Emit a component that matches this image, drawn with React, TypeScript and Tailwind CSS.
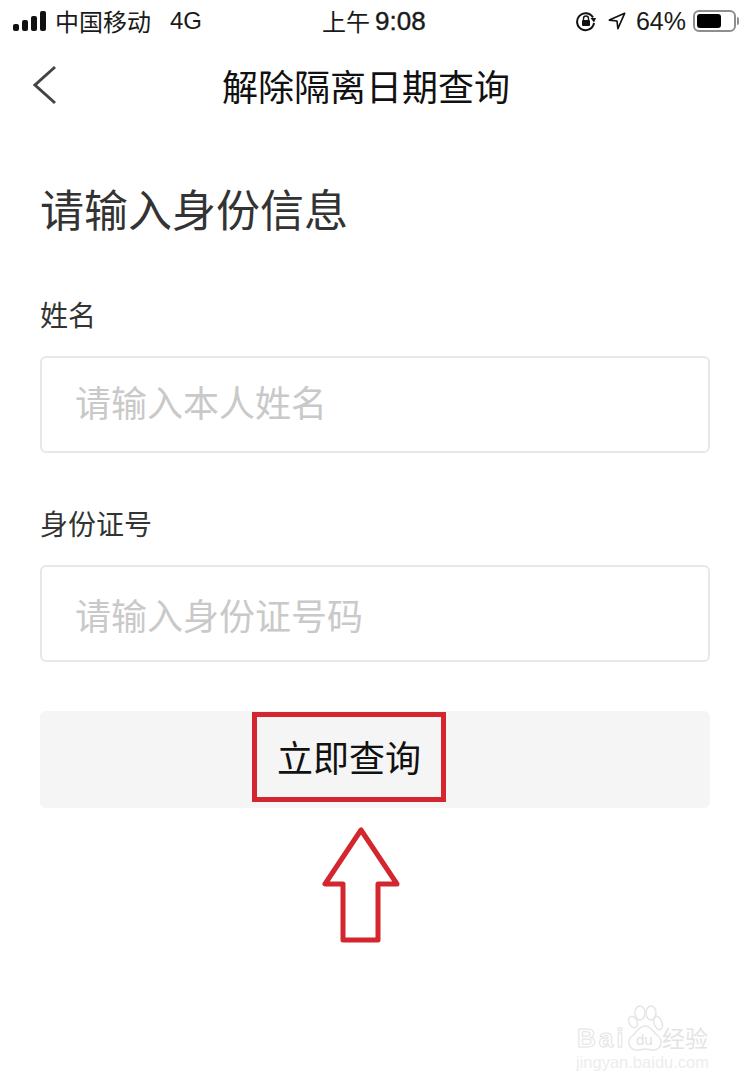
import React from 'react';

const cjk = '"Noto Sans CJK SC", "Liberation Sans", sans-serif';
const latin = '"Liberation Sans", sans-serif';

const StatusBar = () => (
    <div className="relative flex h-[42px] items-center justify-between pl-[13px] pr-[11px] text-[24px] text-[#1a1a1a]">
        <div className="flex items-center">
            <svg width="33" height="20" viewBox="0 0 33 20" className="mr-[9px]">
                <rect x="0" y="13" width="6" height="7" rx="2" fill="#111" />
                <rect x="9" y="9" width="6" height="11" rx="2" fill="#111" />
                <rect x="18" y="5" width="6" height="15" rx="2" fill="#111" />
                <rect x="27" y="0" width="6" height="20" rx="2" fill="#111" />
            </svg>
            <span className="leading-none">中国移动</span>
            <span className="ml-[19px] text-[24px] leading-none" style={{ fontFamily: latin }}>4G</span>
        </div>
        <div className="absolute left-[322px] flex items-center leading-none">
            上午<span className="ml-[5px] text-[26px] font-medium [-webkit-text-stroke:0.4px_#1a1a1a]" style={{ fontFamily: latin }}>9:08</span>
        </div>
        <div className="flex items-center">
            <svg width="22" height="22" viewBox="0 0 22 22" className="mr-[11px]">
                <path d="M18 7.5A8.5 8.5 0 1 0 19 13" fill="none" stroke="#111" strokeWidth="2" />
                <path d="M15.5 8 L21 8 L19 12.5 Z" fill="#111" />
                <rect x="7" y="10" width="8" height="6" rx="1" fill="#111" />
                <path d="M8.5 10V8.5a2.5 2.5 0 0 1 5 0V10" fill="none" stroke="#111" strokeWidth="1.4" />
            </svg>
            <svg width="18" height="18" viewBox="0 0 20 20" className="mr-[10px]">
                <path d="M18.5 1.5 L1.5 9 L10 10 L11 18.5 Z" fill="none" stroke="#111" strokeWidth="1.8" strokeLinejoin="round" />
            </svg>
            <span className="text-[25px] leading-none" style={{ fontFamily: latin }}>64%</span>
            <div className="ml-[7px] flex h-[22px] w-[43px] items-center rounded-[6px] border-2 border-[#8e8e8e] p-[2px]">
                <div className="h-full w-[24px] rounded-[3px] bg-black" />
            </div>
            <div className="ml-[1px] h-[8px] w-[2px] rounded-r bg-[#8e8e8e]" />
        </div>
    </div>
);

const Field = ({ label, placeholder, inputClass }: { label: string; placeholder: string; inputClass: string }) => (
    <div>
        <div className="mb-[22px] text-[28px] leading-[40px] text-[#333]">{label}</div>
        <div className={`flex h-[97px] items-center rounded-[6px] border-2 border-[#e8e8e8] pl-[33px] text-[36px] text-[#c9c9c9] ${inputClass}`}>
            {placeholder}
        </div>
    </div>
);

const Watermark = () => (
    <div className="absolute left-[576px] top-[1005px] h-[64px] w-[134px] text-white">
        <svg width="38" height="47" viewBox="0 0 38 47" className="absolute left-[50px] top-0">
            <g fill="none" stroke="#e6e6e6" strokeWidth="1.5">
                <ellipse cx="7" cy="17" rx="4" ry="6" transform="rotate(-25 7 17)" />
                <ellipse cx="14" cy="8" rx="5" ry="7" />
                <ellipse cx="25" cy="8" rx="5" ry="7" />
                <ellipse cx="32" cy="18" rx="4" ry="7" transform="rotate(-20 32 18)" />
                <path d="M19 21 C13 21 11 27 6 31 C1 35 2 45 11 45 C15 45 16 44 19 44 C22 44 24 45 27 45 C36 45 37 35 32 31 C27 27 25 21 19 21 Z" />
            </g>
        </svg>
        <span className="absolute left-[60px] top-[27px] text-[15px] leading-none text-[#e2e2e2]" style={{ fontFamily: latin }}>du</span>
        <span className="absolute left-[1px] top-[20px] text-[26px] font-bold leading-none tracking-[3px] [-webkit-text-stroke:1px_#e4e4e4]" style={{ fontFamily: latin }}>Bai</span>
        <span className="absolute left-[86px] top-[21px] text-[23px] leading-none text-[#e4e4e4]">经验</span>
        <span className="absolute left-0 top-[49px] whitespace-nowrap text-[16.5px] leading-none text-[#ededed]" style={{ fontFamily: latin }}>jingyan.baidu.com</span>
    </div>
);

const App: React.FC = () => {
    return (
        <div className="relative h-[1087px] w-[750px] overflow-hidden bg-white" style={{ fontFamily: cjk }}>
            <StatusBar />

            <div className="relative flex h-[88px] items-center justify-center pb-[2px] pr-[18px]">
                <svg width="26" height="40" viewBox="0 0 26 40" className="absolute left-[32px] top-[23px]">
                    <path d="M23 2 L3 20 L23 38" fill="none" stroke="#444" strokeWidth="3" />
                </svg>
                <span className="text-[36px] text-[#111]">解除隔离日期查询</span>
            </div>

            <div className="px-[40px]">
                <h1 className="pt-[46px] text-[44px] leading-[64px] text-[#333]">请输入身份信息</h1>
                <div className="mt-[54px]"><Field label="姓名" placeholder="请输入本人姓名" inputClass="pb-[8px]" /></div>
                <div className="mt-[50px]"><Field label="身份证号" placeholder="请输入身份证号码" inputClass="" /></div>
                <div className="mt-[49px] flex h-[97px] items-center justify-center rounded-[6px] bg-[#f5f5f5] pb-[8px] pr-[52px] text-[36px] text-[#111]">
                    立即查询
                </div>
            </div>

            {/* red annotation over the button */}
            <div className="absolute left-[252px] top-[712px] h-[90px] w-[194px] border-[5px] border-[#d3262f]" />
            <svg width="90" height="126" viewBox="0 0 90 126" className="absolute left-[316px] top-[822px]">
                <path d="M45 8 L9 62 L27 62 L27 118 L62 118 L62 62 L81 62 Z" fill="none" stroke="#d3262f" strokeWidth="5" strokeLinejoin="round" />
            </svg>

            <Watermark />
        </div>
    );
};

export default App;
